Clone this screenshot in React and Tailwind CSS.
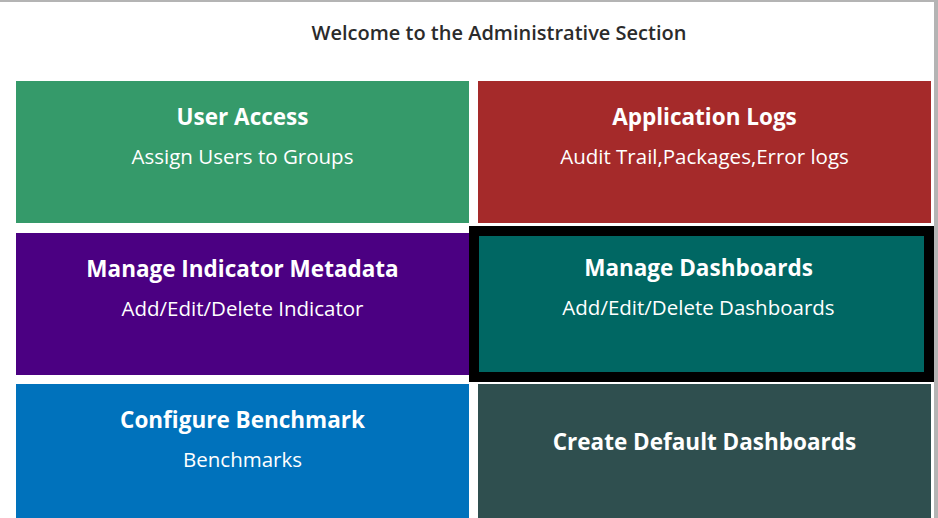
import React from "react";

const tiles = [
  { title: "User Access", sub: "Assign Users to Groups", bg: "bg-[#359a6a]" },
  { title: "Application Logs", sub: "Audit Trail,Packages,Error logs", bg: "bg-[#a52a2a]" },
  { title: "Manage Indicator Metadata", sub: "Add/Edit/Delete Indicator", bg: "bg-[#4b0082]" },
  { title: "Manage Dashboards", sub: "Add/Edit/Delete Dashboards", bg: "bg-[#006763]", active: true },
  { title: "Configure Benchmark", sub: "Benchmarks", bg: "bg-[#0072bc]" },
  { title: "Create Default Dashboards", sub: null, bg: "bg-[#2f4f4f]" },
];

function Tile({ tile }) {
  if (tile.active) {
    return (
      <div className="h-[142px]">
        <div className="-ml-[9px] -mr-[3px] -mt-[7px] h-[156px] border-[10px] border-black">
          <div className={`h-full ${tile.bg} pt-[17px] pr-[6px] text-center text-white`}>
            <div className="text-[22.5px] font-bold leading-[30px]">{tile.title}</div>
            <div className="mt-[11px] text-[20.5px] leading-[26px]">{tile.sub}</div>
          </div>
        </div>
      </div>
    );
  }
  return (
    <div className={`h-[142px] ${tile.bg} text-center text-white ${tile.sub ? "pt-[21px]" : "pt-[43px]"}`}>
      <div className="text-[22.5px] font-bold leading-[30px]">{tile.title}</div>
      {tile.sub && <div className="mt-[11px] text-[20.5px] leading-[26px]">{tile.sub}</div>}
    </div>
  );
}

export default function App() {
  return (
    <div
      className="h-[518px] w-[938px] overflow-hidden border-t-2 border-r-4 border-[#b4b4b4] bg-white"
      style={{ fontFamily: '"Open Sans", "Noto Sans", sans-serif' }}
    >
      <div className="pl-[64px] pt-[18px] text-center text-[20px] font-semibold leading-[26px] text-[#2b2b2b]">
        Welcome to the Administrative Section
      </div>
      <div className="mt-[35px] ml-[16px] mr-[3px] grid grid-cols-2 gap-x-[9px] gap-y-[9.5px]">
        {tiles.map((t) => (
          <Tile key={t.title} tile={t} />
        ))}
      </div>
    </div>
  );
}
